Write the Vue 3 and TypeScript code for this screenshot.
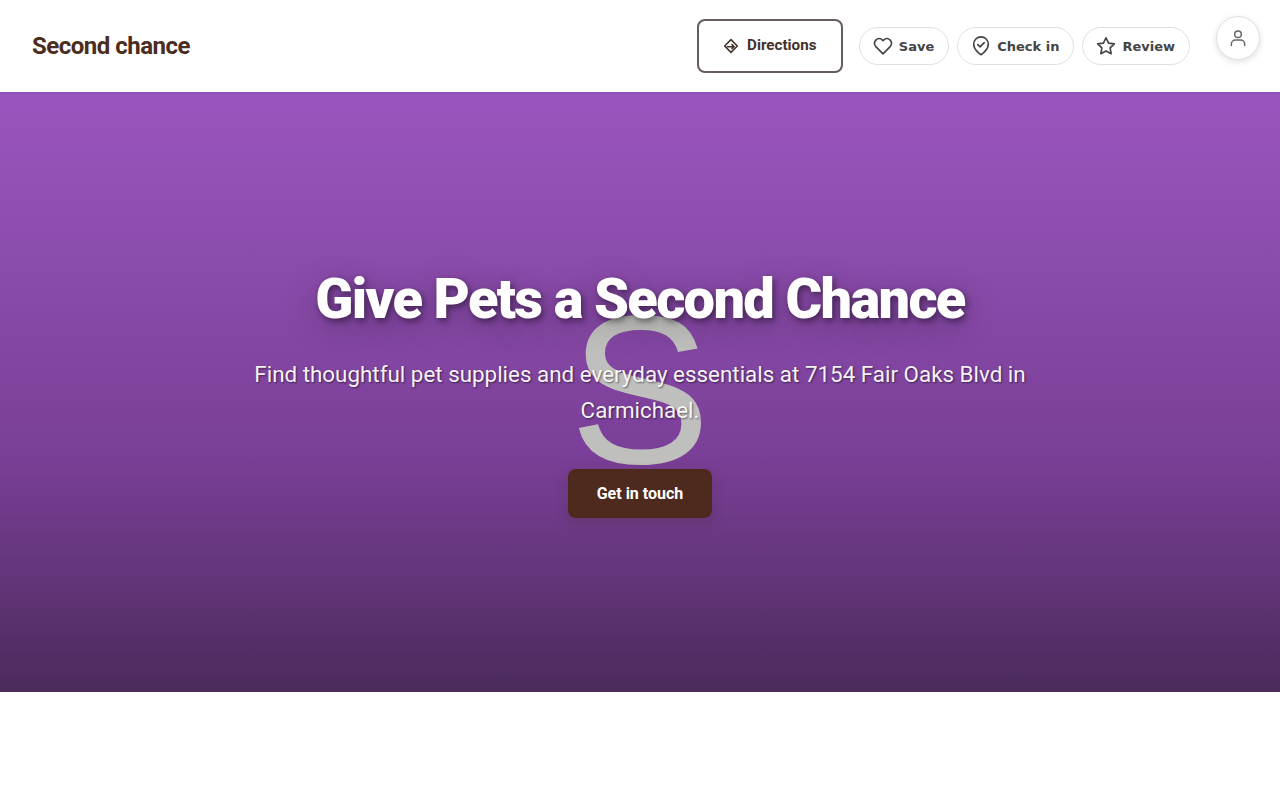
<script setup lang="ts">
const actions = [
  { key: 'save', label: 'Save' },
  { key: 'check', label: 'Check in' },
  { key: 'review', label: 'Review' },
]
</script>

<template>
  <div class="page">
    <header class="topbar">
      <div class="brand">Second chance</div>
      <div class="topbar__right">
        <button class="directions">
          <svg width="16" height="16" viewBox="0 0 24 24" fill="none" stroke="currentColor" stroke-width="2.3" stroke-linecap="round" stroke-linejoin="round">
            <path d="M12 2.500 21.500 12 12 21.500 2.500 12Z" />
            <path d="M6.500 13h10M13.500 10l3 3-3 3" />
          </svg>
          <span class="directions__label">Directions</span>
        </button>
        <button v-for="a in actions" :key="a.key" class="pill">
          <svg v-if="a.key === 'save'" width="22" height="22" viewBox="0 0 24 24" fill="none" stroke="currentColor" stroke-width="1.8" stroke-linejoin="round">
            <path d="M12 20.500 4.200 12.700a5 5 0 0 1 0-7.200 5.100 5.100 0 0 1 7.200 0l.6.7.6-.7a5.100 5.100 0 0 1 7.200 0 5 5 0 0 1 0 7.200Z" />
          </svg>
          <svg v-else-if="a.key === 'check'" width="22" height="22" viewBox="0 0 24 24" fill="none" stroke="currentColor" stroke-width="1.8" stroke-linecap="round" stroke-linejoin="round">
            <path d="M12 21.500s-8-5-8-11.500a8 8 0 0 1 16 0c0 6.500-8 11.500-8 11.500Z" />
            <path d="m8.500 10.500 2.500 2.500 4.500-4.700" />
          </svg>
          <svg v-else width="22" height="22" viewBox="0 0 24 24" fill="none" stroke="currentColor" stroke-width="1.8" stroke-linejoin="round">
            <path d="m12 3 2.800 5.800 6.300.9-4.600 4.400 1.100 6.300L12 17.400l-5.600 3 1.100-6.300-4.600-4.400 6.300-.9Z" />
          </svg>
          <span>{{ a.label }}</span>
        </button>
        <button class="avatar">
          <svg width="20" height="20" viewBox="0 0 24 24" fill="none" stroke="currentColor" stroke-width="1.8" stroke-linecap="round">
            <circle cx="12" cy="7.500" r="4" />
            <path d="M4 21v-1.500a5 5 0 0 1 5-5h6a5 5 0 0 1 5 5V21" />
          </svg>
        </button>
      </div>
    </header>

    <section class="hero">
      <div class="hero__letter">S</div>
      <div class="hero__content">
        <h1>Give Pets a Second Chance</h1>
        <p>Find thoughtful pet supplies and everyday essentials at 7154 Fair Oaks Blvd in Carmichael.</p>
        <a class="cta">Get in touch</a>
      </div>
    </section>
  </div>
</template>

<style>
html,
body {
  background: #ffffff;
  margin: 0;
}
</style>

<style scoped>
.page {
  font-family: Roboto, sans-serif;
  height: 800px;
  overflow: hidden;
}

.topbar {
  align-items: center;
  background: #ffffff;
  box-shadow: 0 1px 2px rgba(0, 0, 0, 0.1);
  box-sizing: border-box;
  display: flex;
  height: 92px;
  justify-content: space-between;
  padding: 0 20px 0 32px;
  position: relative;
  z-index: 1;
}

.brand {
  color: #4a2c20;
  font-size: 24px;
  font-weight: 700;
  letter-spacing: -0.5px;
}

.topbar__right {
  align-items: center;
  display: flex;
  gap: 8px;
}

.directions {
  align-items: center;
  background: #ffffff;
  border: 2px solid #665c5e;
  border-radius: 8px;
  box-sizing: border-box;
  color: #44312b;
  display: flex;
  font-family: Roboto, sans-serif;
  font-size: 15.2px;
  font-weight: 700;
  gap: 8px;
  height: 54px;
  justify-content: center;
  margin-right: 8px;
  width: 146px;
}

.directions__label {
  margin-bottom: 2px;
}

.pill {
  align-items: center;
  background: #ffffff;
  border: 1px solid #e0e0e0;
  border-radius: 20px;
  box-sizing: border-box;
  color: #444444;
  display: flex;
  font-family: "DejaVu Sans", sans-serif;
  font-size: 13px;
  font-weight: 700;
  gap: 5px;
  height: 38px;
  padding: 0 14px 0 12px;
}

.avatar {
  align-items: center;
  background: #ffffff;
  border: 1px solid #e0e0e0;
  border-radius: 50%;
  box-shadow: 0 2px 6px rgba(0, 0, 0, 0.12);
  color: #666666;
  display: flex;
  height: 44px;
  justify-content: center;
  margin-left: 18px;
  margin-top: -16px;
  padding: 0;
  width: 44px;
}

.hero {
  align-items: center;
  background: linear-gradient(180deg, #9a55be 0%, #8a4baa 30%, #7a3f98 60%, #5e3373 85%, #4b2a5c 100%);
  display: flex;
  height: 600px;
  justify-content: center;
  position: relative;
}

.hero__letter {
  color: #bfbfbd;
  font-family: "Liberation Sans", sans-serif;
  font-size: 212px;
  left: 0;
  line-height: 1;
  position: absolute;
  right: 0;
  text-align: center;
  top: 192px;
}

.hero__content {
  color: #ffffff;
  position: relative;
  text-align: center;
  width: 800px;
}

h1 {
  font-size: 56px;
  font-weight: 900;
  letter-spacing: -0.03em;
  line-height: 64px;
  margin: 0 0 25px;
  text-shadow: 2px 3px 6px rgba(0, 0, 0, 0.45), 0 8px 32px rgba(0, 0, 0, 0.25);
}

p {
  color: rgba(255, 255, 255, 0.95);
  font-size: 22.4px;
  line-height: 36px;
  margin: 0 0 41px;
  text-shadow: 1px 1px 2px rgba(0, 0, 0, 0.5);
}

.cta {
  background: #4e2a1e;
  border-radius: 8px;
  box-shadow: 0 4px 12px rgba(74, 44, 29, 0.25);
  box-sizing: border-box;
  display: inline-block;
  font-size: 16px;
  font-weight: 700;
  height: 49px;
  line-height: 49px;
  width: 144px;
}
</style>
